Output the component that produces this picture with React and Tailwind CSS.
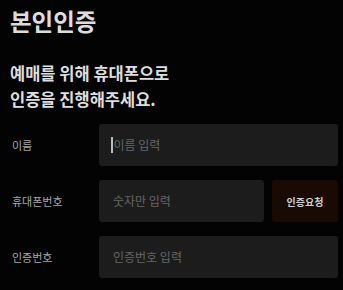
export default function App() {
  return (
    <div className="h-[290px] w-[343px] overflow-hidden bg-[#030303] pl-[10px] pr-[5px] pt-[5px] font-['Noto_Sans_CJK_KR',sans-serif]">
      <h1 className="text-[23.5px] font-bold leading-[32px] text-[#dcdcdc]">본인인증</h1>
      <p className="mt-[23px] text-[16.5px] font-semibold leading-[26px] text-[#dedede]">
        예매를 위해 휴대폰으로
        <br />
        인증을 진행해주세요.
      </p>

      <div className="mt-[12px] flex flex-col gap-[14px]">
        <div className="flex items-center">
          <label className="w-[89px] pl-[2px] text-[11px] text-[#a8a8a8]">이름</label>
          <div className="flex h-[42px] flex-1 items-center rounded-[3px] bg-[#1c1c1c] px-[12px]">
            <span className="mr-[1px] h-[16px] w-[1.5px] bg-[#bbbbbb]" />
            <span className="text-[12px] text-[#666666]">이름 입력</span>
          </div>
        </div>

        <div className="flex items-center">
          <label className="w-[89px] pl-[2px] text-[11px] text-[#a8a8a8]">휴대폰번호</label>
          <div className="flex h-[42px] flex-1 items-center rounded-[3px] bg-[#1c1c1c] px-[14px]">
            <span className="text-[12px] text-[#666666]">숫자만 입력</span>
          </div>
          <button className="ml-[8px] flex h-[42px] w-[66px] items-center justify-center rounded-[3px] bg-[#1a0a04] text-[10px] font-bold text-[#d0d0d0]">
            인증요청
          </button>
        </div>

        <div className="flex items-center">
          <label className="w-[89px] pl-[2px] text-[11px] text-[#a8a8a8]">인증번호</label>
          <div className="flex h-[42px] flex-1 items-center rounded-[3px] bg-[#1c1c1c] px-[14px]">
            <span className="text-[12px] text-[#666666]">인증번호 입력</span>
          </div>
        </div>
      </div>
    </div>
  );
}
